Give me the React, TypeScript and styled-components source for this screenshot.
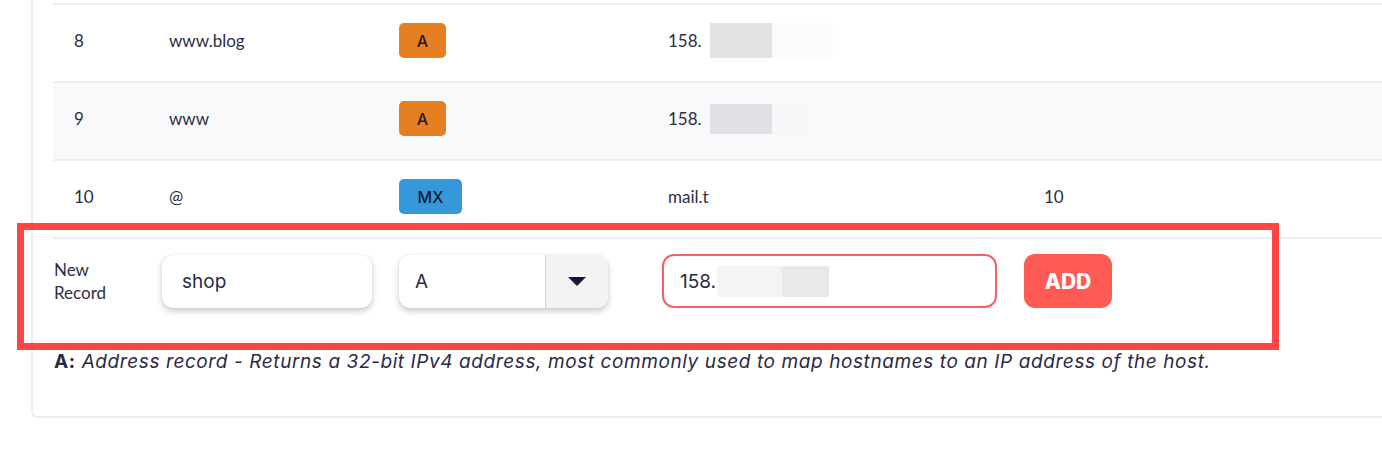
import React from "react";
import styled, { createGlobalStyle } from "styled-components";

const Global = createGlobalStyle`
  html, body { margin: 0; padding: 0; background: #ffffff; }
  body { font-family: Lato, "Noto Sans", sans-serif; color: #2d2d44; }
  * { box-sizing: border-box; }
`;

const Page = styled.div`
  position: relative;
  width: 1382px;
  height: 467px;
  overflow: hidden;
  padding-left: 31px;
`;

const Card = styled.div`
  width: 1400px;
  border: 2px solid #e9eded;
  border-top: none;
  border-radius: 0 0 0 7px;
  padding: 3px 20px 42px 20px;
`;

const Table = styled.div`
  border-top: 2px solid #eceff1;
`;

const Row = styled.div<{ $alt?: boolean }>`
  display: grid;
  grid-template-columns: 116px 230px 269px 376px 1fr;
  align-items: center;
  height: 78px;
  padding-bottom: 5px;
  border-bottom: 2px solid #eceff1;
  background: ${(p) => (p.$alt ? "#f8f9fa" : "#ffffff")};
  font-size: 17px;
  color: #2d2d44;
`;

const Cell = styled.div<{ $pl?: number }>`
  padding-left: ${(p) => p.$pl ?? 0}px;
  display: flex;
  align-items: center;
  white-space: nowrap;
`;

const Badge = styled.span<{ $color: string; $w: number }>`
  display: inline-flex;
  align-items: center;
  justify-content: center;
  width: ${(p) => p.$w}px;
  height: 35px;
  border-radius: 5px;
  background: ${(p) => p.$color};
  color: #1b1b38;
  font-family: Inter, "Noto Sans", sans-serif;
  font-size: 16px;
  font-weight: 500;
`;

const Redact = styled.span<{ $bg: string; $w: number; $h: number }>`
  display: inline-block;
  width: ${(p) => p.$w}px;
  height: ${(p) => p.$h}px;
  background: ${(p) => p.$bg};
`;

const FormRow = styled.div`
  display: flex;
  align-items: center;
  gap: 27px;
  padding: 15px 0 16px 1px;
`;

const Label = styled.div`
  width: 81px;
  font-size: 17px;
  line-height: 23px;
  color: #2d2d44;
`;

const TextBox = styled.div`
  width: 210px;
  height: 53px;
  border-radius: 11px;
  background: #fff;
  box-shadow: 0 3px 6px rgba(0, 0, 0, 0.22), 0 0 1px rgba(0, 0, 0, 0.15);
  display: flex;
  align-items: center;
  padding-left: 20px;
  font-family: Inter, "Noto Sans", sans-serif;
  font-size: 19px;
  color: #2a2a45;
`;

const Select = styled.div`
  width: 209px;
  height: 53px;
  border-radius: 11px;
  background: #fff;
  box-shadow: 0 3px 6px rgba(0, 0, 0, 0.22), 0 0 1px rgba(0, 0, 0, 0.15);
  display: flex;
  overflow: hidden;
  font-family: Inter, "Noto Sans", sans-serif;
  font-size: 19px;
  color: #2a2a45;
`;

const SelectValue = styled.div`
  flex: 1;
  display: flex;
  align-items: center;
  padding-left: 16px;
`;

const SelectArrow = styled.div`
  width: 63px;
  background: #f3f3f3;
  border-left: 1px solid #d2d2d2;
  display: flex;
  align-items: center;
  justify-content: center;
`;

const IpBox = styled.div`
  margin-left: 27px;
  width: 335px;
  height: 54px;
  border: 2px solid #f56060;
  border-radius: 12px;
  display: flex;
  align-items: center;
  padding-left: 16px;
  font-family: Inter, "Noto Sans", sans-serif;
  font-size: 19px;
  color: #2a2a45;
`;

const AddButton = styled.button`
  width: 88px;
  height: 54px;
  border: none;
  border-radius: 11px;
  background: #ff5a53;
  color: #fff;
  font-family: Inter, "Noto Sans", sans-serif;
  font-weight: 800;
  font-size: 21px;
  letter-spacing: 0px;
`;

const Note = styled.p`
  margin: 26px 0 0 1px;
  font-family: Inter, "Noto Sans", sans-serif;
  font-size: 19px;
  line-height: 24px;
  color: #2a2a45;
  letter-spacing: 0.59px;
  white-space: nowrap;
  b { font-weight: 700; }
  i { font-style: italic; }
`;

const Highlight = styled.div`
  position: absolute;
  left: 17px;
  top: 223px;
  width: 1262px;
  height: 127px;
  border: 7px solid #ff4444;
  pointer-events: none;
`;

type Rec = {
  n: number;
  name: string;
  type: "A" | "MX";
  value: React.ReactNode;
  prio?: string;
};

const records: Rec[] = [
  {
    n: 8,
    name: "www.blog",
    type: "A",
    value: (
      <>
        158.
        <Redact $bg="#e3e3e6" $w={62} $h={35} style={{ marginLeft: 8 }} />
        <Redact $bg="#fbfbfc" $w={61} $h={35} />
      </>
    ),
  },
  {
    n: 9,
    name: "www",
    type: "A",
    value: (
      <>
        158.
        <Redact $bg="#e1e1e5" $w={62} $h={30} style={{ marginLeft: 8 }} />
        <Redact $bg="#f6f7f8" $w={37} $h={30} />
      </>
    ),
  },
  { n: 10, name: "@", type: "MX", value: "mail.t", prio: "10" },
];

const typeColor = { A: "#e67e22", MX: "#3498db" };
const typeWidth = { A: 47, MX: 63 };

const Caret = () => (
  <svg width="18" height="9" viewBox="0 0 18 9">
    <polygon points="0,0 18,0 9,9" fill="#16163a" />
  </svg>
);

export default function App() {
  return (
    <>
      <Global />
      <Page>
        <Card>
          <Table>
            {records.map((r, i) => (
              <Row key={r.n} $alt={i === 1}>
                <Cell $pl={21}>{r.n}</Cell>
                <Cell>{r.name}</Cell>
                <Cell>
                  <Badge $color={typeColor[r.type]} $w={typeWidth[r.type]}>
                    {r.type}
                  </Badge>
                </Cell>
                <Cell>{r.value}</Cell>
                <Cell>{r.prio ?? ""}</Cell>
              </Row>
            ))}
          </Table>
          <FormRow>
            <Label>
              New
              <br />
              Record
            </Label>
            <TextBox>shop</TextBox>
            <Select>
              <SelectValue>A</SelectValue>
              <SelectArrow>
                <Caret />
              </SelectArrow>
            </Select>
            <IpBox>
              158.
              <Redact $bg="#f4f4f5" $w={65} $h={31} style={{ marginLeft: 1 }} />
              <Redact $bg="#e9e9eb" $w={47} $h={31} />
            </IpBox>
            <AddButton>ADD</AddButton>
          </FormRow>
          <Note>
            <b>A:</b>{" "}
            <i>
              Address record - Returns a 32-bit IPv4 address, most commonly used to map hostnames to an
              IP address of the host.
            </i>
          </Note>
        </Card>
        <Highlight />
      </Page>
    </>
  );
}
